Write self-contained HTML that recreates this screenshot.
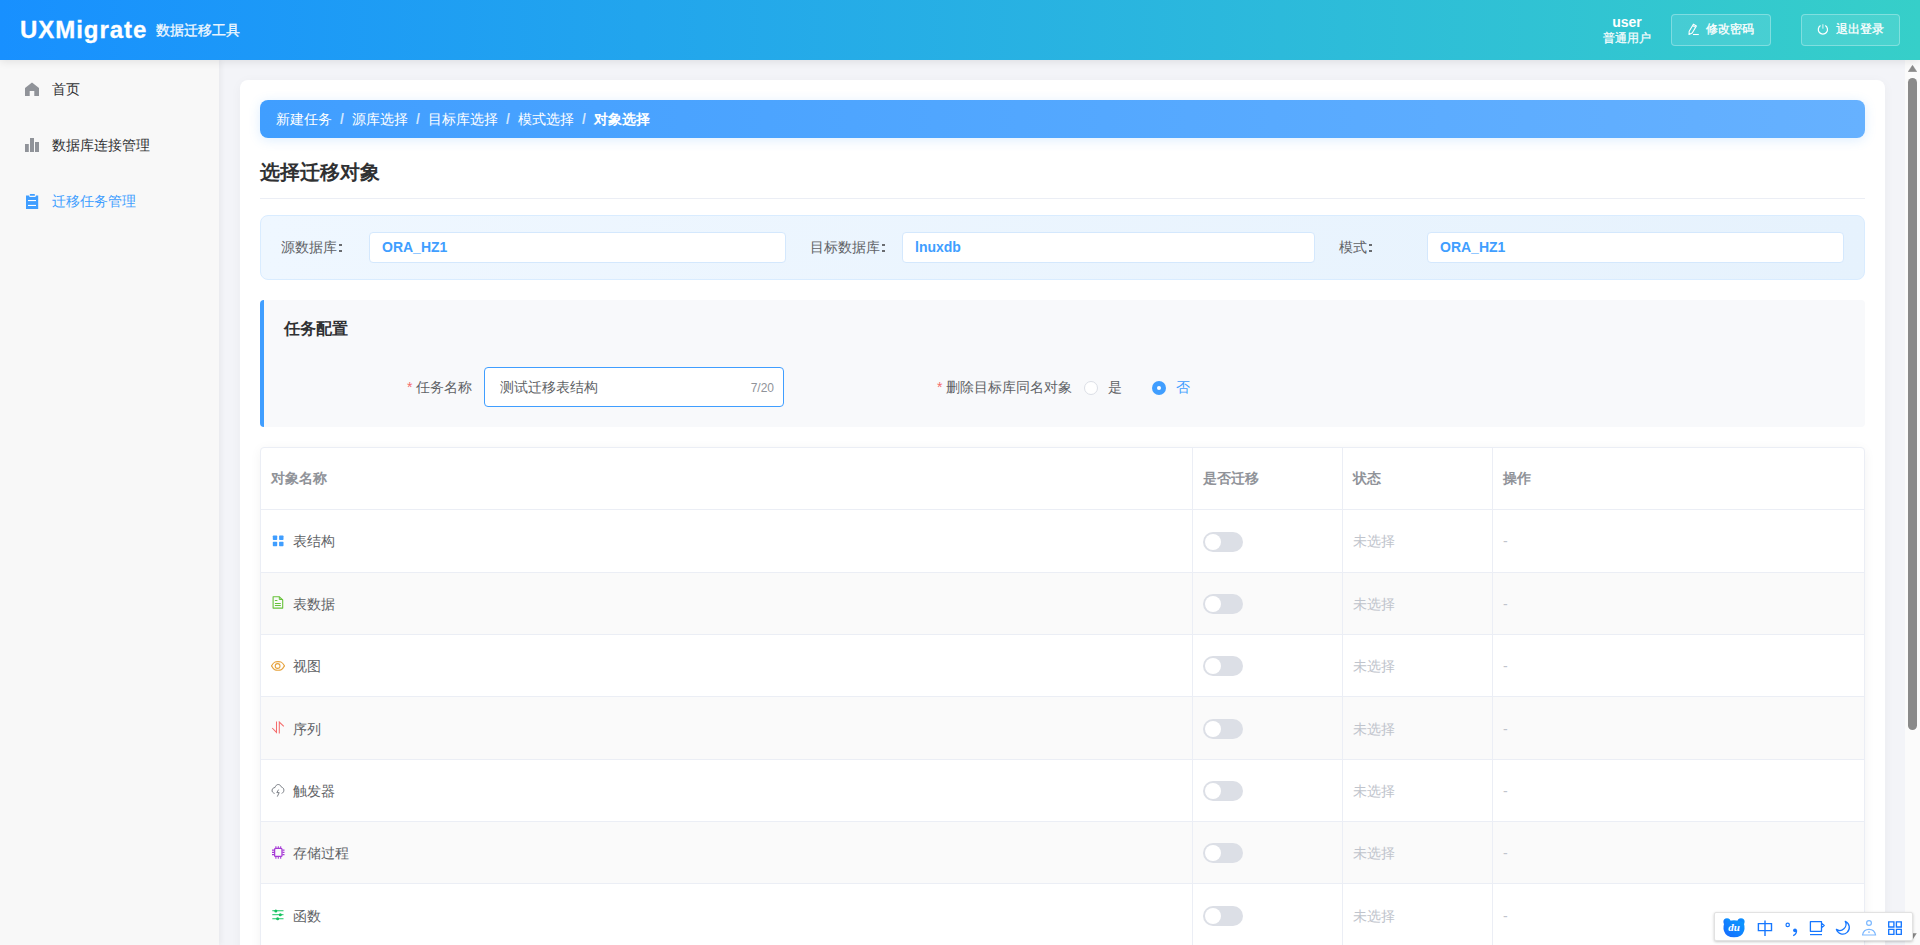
<!DOCTYPE html>
<html><head><meta charset="utf-8">
<style>
*{box-sizing:border-box;margin:0;padding:0}
html,body{width:1920px;height:945px;overflow:hidden;font-family:"Liberation Sans",sans-serif;font-size:14px;color:#606266;background:#f2f3f6}
.abs{position:absolute}
#hdr .tk{-webkit-text-stroke:0.3px #fff}
#hdr{position:absolute;left:0;top:0;width:1920px;height:60px;background:linear-gradient(90deg,#1890ff 0%,#36cfc9 100%);box-shadow:0 2px 8px rgba(0,0,0,0.09);z-index:5}
#logo{position:absolute;left:20px;top:15px;-webkit-text-stroke:0.3px #fff;font-size:24px;font-weight:bold;color:#fff;letter-spacing:0.95px;line-height:30px}
#sub{position:absolute;left:156px;top:21px;font-size:14px;color:rgba(255,255,255,0.9);line-height:18px}
#uname{position:absolute;left:1603px;width:48px;top:14px;text-align:center;font-size:14px;font-weight:bold;color:#fff;line-height:16px}
#urole{position:absolute;left:1603px;width:48px;top:31px;text-align:center;font-size:12px;color:rgba(255,255,255,0.9);line-height:14px}
.hbtn{position:absolute;top:14px;height:32px;border:1px solid rgba(255,255,255,0.3);background:rgba(255,255,255,0.1);border-radius:4px;color:#fff;font-size:12px;line-height:30px}
.hbtn svg{position:absolute;left:16px;top:9px}
.hbtn span{position:absolute;left:34px;top:-1px}
#side{position:absolute;left:0;top:60px;width:219px;height:885px;background:#f8f8f8;box-shadow:2px 0 6px rgba(0,0,0,0.05);z-index:3}
.mi{position:absolute;left:0;width:219px;height:56px}
.mi svg{position:absolute;left:24px;top:21px}
.mi span{position:absolute;left:52px;top:20px;line-height:18px;color:#303133}
#main{position:absolute;left:219px;top:60px;width:1686px;height:885px;background:#f3f4f8;overflow:hidden}
#card{position:absolute;left:21px;top:20px;width:1645px;height:900px;background:#fff;border-radius:8px;box-shadow:0 2px 12px rgba(0,0,0,0.04)}
#scroll{position:absolute;left:1905px;top:60px;width:15px;height:885px;background:#fbfbfb;z-index:4}

.c{position:absolute;z-index:2}
#bc{left:260px;top:100px;width:1605px;height:38px;border-radius:8px;background:linear-gradient(90deg,#409eff,#66b1ff);box-shadow:0 2px 12px rgba(64,158,255,0.18);color:#fff;line-height:38px;padding-left:16px;white-space:nowrap}
#bc i{display:inline-block;width:20px;text-align:center;font-style:normal;color:rgba(255,255,255,0.75);font-weight:bold}
#title{left:260px;top:158px;width:1605px;height:41px;border-bottom:1px solid #ebeef5;font-size:20px;font-weight:bold;color:#303133;line-height:28px}
#info{left:260px;top:215px;width:1605px;height:65px;border:1px solid #d9ecff;border-radius:8px;background:linear-gradient(90deg,#eff7ff,#e6f2fd)}
.lab{position:absolute;top:16px;line-height:31px;color:#606266;white-space:nowrap}
.colon{position:absolute;top:12px;width:2.6px;height:2px;background:#6a6c70;box-shadow:0 6px 0 #6a6c70}
.inp{position:absolute;top:16px;height:31px;background:#fff;border:1px solid #d4e8fd;border-radius:4px;color:#409eff;font-weight:bold;line-height:29px;padding-left:12px}
#cfg{left:260px;top:300px;width:1605px;height:127px;background:#f8f9fb;border-left:4px solid #409eff;border-radius:4px}
#cfgt{position:absolute;left:20px;top:19px;font-size:16px;font-weight:bold;color:#303133;line-height:20px}
.req{color:#f56c6c;margin-right:4px}
#tbl{left:260px;top:447px;width:1605px;height:520px;border:1px solid #ebeef5;border-radius:4px;background:#fff;box-shadow:0 2px 12px rgba(0,0,0,0.05);overflow:hidden}
.row{position:absolute;left:0;width:1603px;border-bottom:1px solid #ebeef5}
.row.alt{background:#fafafa}
.vl{position:absolute;top:0;width:1px;height:520px;background:#ebeef5}
.th{position:absolute;font-weight:bold;color:#909399;line-height:20px}
.nm{position:absolute;left:32px;top:21px;line-height:20px;color:#606266;white-space:nowrap}
.ic{position:absolute;left:10px;top:23.75px}
.sw{position:absolute;left:942px;top:22px;width:40px;height:20px;border-radius:10px;background:#dcdfe6}
.sw:after{content:"";position:absolute;left:2px;top:2px;width:16px;height:16px;border-radius:50%;background:#fff}
.st{position:absolute;left:1092px;top:21px;color:#c0c4cc;line-height:20px}
.op{position:absolute;left:1242px;top:21px;color:#c0c4cc;line-height:20px}
</style></head><body>
<div id="hdr">
  <div id="logo">UXMigrate</div>
  <div id="sub" class="tk">数据迁移工具</div>
  <div id="uname">user</div>
  <div id="urole" class="tk">普通用户</div>
  <div class="hbtn" style="left:1671px;width:100px">
    <svg style="left:14px;top:7px" width="16" height="16" viewBox="0 0 16 16"><path d="M3 12.5 L3.2 9.2 L7.4 2.2 L10.4 4 L6.2 11 Z M6.6 3.6 L9.6 5.4" fill="none" stroke="#fff" stroke-width="1.1" stroke-linejoin="round"/><path d="M7 12.5 H12.8" stroke="#fff" stroke-width="1.1"/></svg>
    <span class="tk">修改密码</span>
  </div>
  <div class="hbtn" style="left:1801px;width:99px">
    <svg style="left:14px;top:8px" width="14" height="14" viewBox="0 0 14 14"><path d="M4.5 2.6 A4.6 4.6 0 1 0 9.3 2.6" fill="none" stroke="#fff" stroke-width="1.2"/><path d="M6.9 1.2 V5.7" stroke="#fff" stroke-width="1" opacity="0.85"/></svg>
    <span class="tk">退出登录</span>
  </div>
</div>
<div id="side">
  <div class="mi" style="top:0">
    <svg style="left:25px;top:22px" width="14" height="14" viewBox="0 0 14 14"><path d="M7 0.4 L14 6 V14 H9.3 V8.9 H4.7 V14 H0 V6 Z" fill="#909399"/></svg>
    <span>首页</span>
  </div>
  <div class="mi" style="top:56px">
    <svg style="left:25px;top:22px" width="14" height="14" viewBox="0 0 14 14"><rect x="0" y="6" width="3.8" height="8" fill="#909399"/><rect x="5" y="0" width="4" height="14" fill="#909399"/><rect x="10" y="4" width="4" height="10" fill="#909399"/></svg>
    <span>数据库连接管理</span>
  </div>
  <div class="mi" style="top:112px">
    <svg style="left:25px;top:22px" width="15" height="15" viewBox="0 0 15 15"><path d="M1 1.6 H4 L4.6 2.9 H10.4 L11 1.6 H13.2 V14.9 H1 Z" fill="#409eff"/><rect x="4.8" y="0" width="5.1" height="1.8" rx="0.5" fill="#409eff"/><rect x="3" y="6" width="8" height="1.1" fill="#fff"/><rect x="3" y="10.9" width="8" height="1.1" fill="#fff"/></svg>
    <span style="color:#409eff">迁移任务管理</span>
  </div>
</div>
<div id="main">
  <div id="card"></div>
</div>

<div class="c" id="bc">新建任务<i>/</i>源库选择<i>/</i>目标库选择<i>/</i>模式选择<i>/</i><b>对象选择</b></div>
<div class="c" id="title">选择迁移对象</div>
<div class="c" id="info">
  <div class="lab" style="left:20px">源数据库<i class="colon" style="left:58px"></i></div>
  <div class="inp" style="left:108px;width:417px">ORA_HZ1</div>
  <div class="lab" style="left:549px">目标数据库<i class="colon" style="left:72px"></i></div>
  <div class="inp" style="left:641px;width:413px">lnuxdb</div>
  <div class="lab" style="left:1078px">模式<i class="colon" style="left:30px"></i></div>
  <div class="inp" style="left:1166px;width:417px">ORA_HZ1</div>
</div>
<div class="c" id="cfg">
  <div id="cfgt">任务配置</div>
  <div class="abs" style="left:143px;top:77px;line-height:20px;color:#606266"><span class="req">*</span>任务名称</div>
  <div class="abs" style="left:220px;top:67px;width:300px;height:40px;border:1px solid #409eff;border-radius:4px;background:#fff">
    <div class="abs" style="left:15px;top:9px;line-height:20px;color:#606266">测试迁移表结构</div>
    <div class="abs" style="right:9px;top:10px;line-height:20px;font-size:12px;color:#909399">7/20</div>
  </div>
  <div class="abs" style="left:673px;top:77px;line-height:20px;color:#606266"><span class="req">*</span>删除目标库同名对象</div>
  <div class="abs" style="left:820px;top:81px;width:14px;height:14px;border:1px solid #dcdfe6;border-radius:50%;background:#fff"></div>
  <div class="abs" style="left:844px;top:77px;line-height:20px;color:#606266">是</div>
  <div class="abs" style="left:888px;top:81px;width:14px;height:14px;border-radius:50%;background:#409eff"><div class="abs" style="left:5px;top:5px;width:4px;height:4px;border-radius:50%;background:#fff"></div></div>
  <div class="abs" style="left:912px;top:77px;line-height:20px;color:#409eff">否</div>
</div>
<div class="c" id="tbl">
<div class="row" style="top:0;height:62px"><div class="th" style="left:10px;top:20px">对象名称</div><div class="th" style="left:942px;top:20px">是否迁移</div><div class="th" style="left:1092px;top:20px">状态</div><div class="th" style="left:1242px;top:20px">操作</div></div>
<div class="row" style="top:62px;height:63px"><svg class="ic" style="top:24px" width="14" height="14" viewBox="0 0 14 14"><rect x="1.8" y="1.5" width="4.4" height="4.4" rx="0.7" fill="#409eff"/><rect x="8.1" y="1.5" width="4.4" height="4.4" rx="0.7" fill="#409eff"/><rect x="1.8" y="7.8" width="4.4" height="4.4" rx="0.7" fill="#409eff"/><rect x="8.1" y="7.8" width="4.4" height="4.4" rx="0.7" fill="#409eff"/></svg><div class="nm" style="top:21px">表结构</div><div class="sw" style="top:22px"></div><div class="st" style="top:21px">未选择</div><div class="op" style="top:21px">-</div></div>
<div class="row alt" style="top:125px;height:62px"><svg class="ic" style="top:23px" width="14" height="14" viewBox="0 0 14 14"><path d="M2.1 0.8 H8.4 L11.7 4 V12.1 H2.1 Z" fill="none" stroke="#67c23a" stroke-width="1.1" stroke-linejoin="round"/><path d="M8.3 0.8 V3.5 H11.7 M3.9 4.5 H6.4 M3.9 7.5 H9.8 M3.9 9.5 H9.8" fill="none" stroke="#67c23a" stroke-width="1"/></svg><div class="nm" style="top:21px">表数据</div><div class="sw" style="top:21px"></div><div class="st" style="top:21px">未选择</div><div class="op" style="top:21px">-</div></div>
<div class="row" style="top:187px;height:62px"><svg class="ic" style="top:24px" width="14" height="14" viewBox="0 0 14 14"><path d="M0.5 6.9 C3 2.6 4.5 2.6 7 2.6 C9.5 2.6 11 2.6 13.5 6.9 C11 11.2 9.5 11.2 7 11.2 C4.5 11.2 3 11.2 0.5 6.9 Z" fill="none" stroke="#e6a23c" stroke-width="1.1"/><circle cx="6.6" cy="7" r="2.4" fill="none" stroke="#e6a23c" stroke-width="1.1"/></svg><div class="nm" style="top:21px">视图</div><div class="sw" style="top:21px"></div><div class="st" style="top:21px">未选择</div><div class="op" style="top:21px">-</div></div>
<div class="row alt" style="top:249px;height:63px"><svg class="ic" style="top:24px" width="14" height="14" viewBox="0 0 14 14"><path d="M5.5 0.4 V11.4 L1.2 7 M8.3 12.5 V1 L12.8 5.4" fill="none" stroke="#f56c6c" stroke-width="1.05"/></svg><div class="nm" style="top:22px">序列</div><div class="sw" style="top:22px"></div><div class="st" style="top:22px">未选择</div><div class="op" style="top:22px">-</div></div>
<div class="row" style="top:312px;height:62px"><svg class="ic" style="top:24px" width="14" height="14" viewBox="0 0 14 14" style="margin-top:-0.75px"><path d="M3.6 9.4 C1.6 8.8 0.8 7.5 1.1 6 C1.4 4.4 2.6 3.6 4 3.5 C4.6 1.6 5.8 0.5 7.2 0.5 C8.8 0.5 9.9 1.7 10.4 3.1 C11.9 3.4 12.9 4.6 12.9 6.1 C12.9 7.8 12 8.9 10.6 9.4" fill="none" stroke="#7d8088" stroke-width="1"/><path d="M7.6 5.6 L5.8 8.6 H8.2 L6.3 12.6" fill="none" stroke="#7d8088" stroke-width="1"/></svg><div class="nm" style="top:21px">触发器</div><div class="sw" style="top:21px"></div><div class="st" style="top:21px">未选择</div><div class="op" style="top:21px">-</div></div>
<div class="row alt" style="top:374px;height:62px"><svg class="ic" style="top:24px" width="14" height="14" viewBox="0 0 14 14"><rect x="3.6" y="2.4" width="7.4" height="8" rx="1" fill="none" stroke="#a63ad6" stroke-width="1.3"/><path d="M4.9 0.2 V2 M7.3 0.2 V2 M9.7 0.2 V2 M4.9 10.8 V12.7 M7.3 10.8 V12.7 M9.7 10.8 V12.7 M1 4.1 H3.2 M1 6.4 H3.2 M1 8.6 H3.2 M11.4 4.1 H13.5 M11.4 6.4 H13.5 M11.4 8.6 H13.5" stroke="#a63ad6" stroke-width="1.1"/></svg><div class="nm" style="top:21px">存储过程</div><div class="sw" style="top:21px"></div><div class="st" style="top:21px">未选择</div><div class="op" style="top:21px">-</div></div>
<div class="row" style="top:436px;height:63px"><svg class="ic" style="top:25px" width="14" height="14" viewBox="0 0 14 14"><path d="M1.3 1.75 H12.5 M1.3 5.7 H12.5 M1.3 9.75 H12.5" stroke="#1cc566" stroke-width="1"/><circle cx="4.8" cy="1.9" r="1.5" fill="#13c25e"/><circle cx="9.3" cy="5.8" r="1.5" fill="#13c25e"/><circle cx="6.6" cy="9.8" r="1.5" fill="#13c25e"/></svg><div class="nm" style="top:22px">函数</div><div class="sw" style="top:22px"></div><div class="st" style="top:22px">未选择</div><div class="op" style="top:22px">-</div></div>
<div class="vl" style="left:931px"></div><div class="vl" style="left:1081px"></div><div class="vl" style="left:1231px"></div>
</div>
</div>
<div id="scroll">
  <svg class="abs" style="left:3px;top:5px" width="9" height="7" viewBox="0 0 9 7"><path d="M4.5 0.3 L8.8 6.7 H0.2 Z" fill="#8a8a8a" stroke="#8a8a8a" stroke-width="0.5" stroke-linejoin="round"/></svg>
  <div class="abs" style="left:3px;top:18px;width:9px;height:652px;border-radius:4.5px;background:#8a8a8a"></div>
  <svg class="abs" style="left:3px;top:873px" width="9" height="7" viewBox="0 0 9 7"><path d="M4.5 6.7 L8.8 0.3 H0.2 Z" fill="#8a8a8a"/></svg>
</div>
<div class="abs" id="ime" style="left:1714px;top:912px;width:199px;height:29px;background:#fff;border:1px solid #e2e2e2;border-radius:2px;box-shadow:0 1px 3px rgba(0,0,0,0.22);z-index:10"></div>
<svg class="abs" style="left:1714px;top:908px;z-index:11" width="206" height="37" viewBox="1714 908 206 37">
<defs><linearGradient id="bg1" x1="0" y1="1" x2="1" y2="0"><stop offset="0" stop-color="#1668ff"/><stop offset="1" stop-color="#0a9cff"/></linearGradient></defs>
<circle cx="1727" cy="921.8" r="3.6" fill="url(#bg1)"/><circle cx="1741" cy="921.8" r="3.6" fill="url(#bg1)"/>
<path d="M1725 922 Q1734 918.5 1743 922 Q1745.5 926 1744 931 Q1742 937.3 1734 937.3 Q1726 937.3 1724 931 Q1722.5 926 1725 922 Z" fill="url(#bg1)"/>
<text x="1734" y="931" font-family="Liberation Serif" font-style="italic" font-weight="bold" font-size="11" fill="#fff" text-anchor="middle">du</text>
<path d="M1758.4 923.6 H1771.5 V930.6 H1758.4 Z M1765 920.4 V935.9" fill="none" stroke="#1677ff" stroke-width="1.4"/>
<circle cx="1787.7" cy="924.9" r="1.7" fill="none" stroke="#1677ff" stroke-width="1.2"/>
<circle cx="1795" cy="930.3" r="1.9" fill="#1677ff"/><path d="M1796.6 930.5 Q1796.6 934 1793.2 935.7" fill="none" stroke="#1677ff" stroke-width="1.3"/>
<path d="M1810.4 921.7 H1821.5 V931.3 H1810.4 Z M1821.8 923.6 L1824.2 925.6 L1821.8 927.4" fill="none" stroke="#1677ff" stroke-width="1.3" stroke-linejoin="round"/>
<path d="M1810 934.6 H1822" stroke="#1677ff" stroke-width="1.2"/>
<path d="M1845.3 921.4 A6.6 6.6 0 1 1 1836.4 929.4 A6.2 6.2 0 0 0 1845.3 921.4 Z" fill="none" stroke="#1677ff" stroke-width="1.3" stroke-linejoin="round"/>
<circle cx="1869" cy="923" r="2.4" fill="none" stroke="#7cb8ff" stroke-width="1.2"/>
<path d="M1862.5 935 Q1863.5 929.3 1869 929.3 Q1874.5 929.3 1875.6 935 Z M1869 931.2 V933" fill="none" stroke="#7cb8ff" stroke-width="1.2" stroke-linejoin="round"/>
<path d="M1888.7 921.8 H1893.9 V927 H1888.7 Z M1896.4 921.8 H1901.3 V927 H1896.4 Z M1888.7 929.3 H1893.9 V934.3 H1888.7 Z M1896.4 929.3 H1901.3 V934.3 H1896.4 Z" fill="none" stroke="#1677ff" stroke-width="1.35"/>
</svg>
</body></html>
